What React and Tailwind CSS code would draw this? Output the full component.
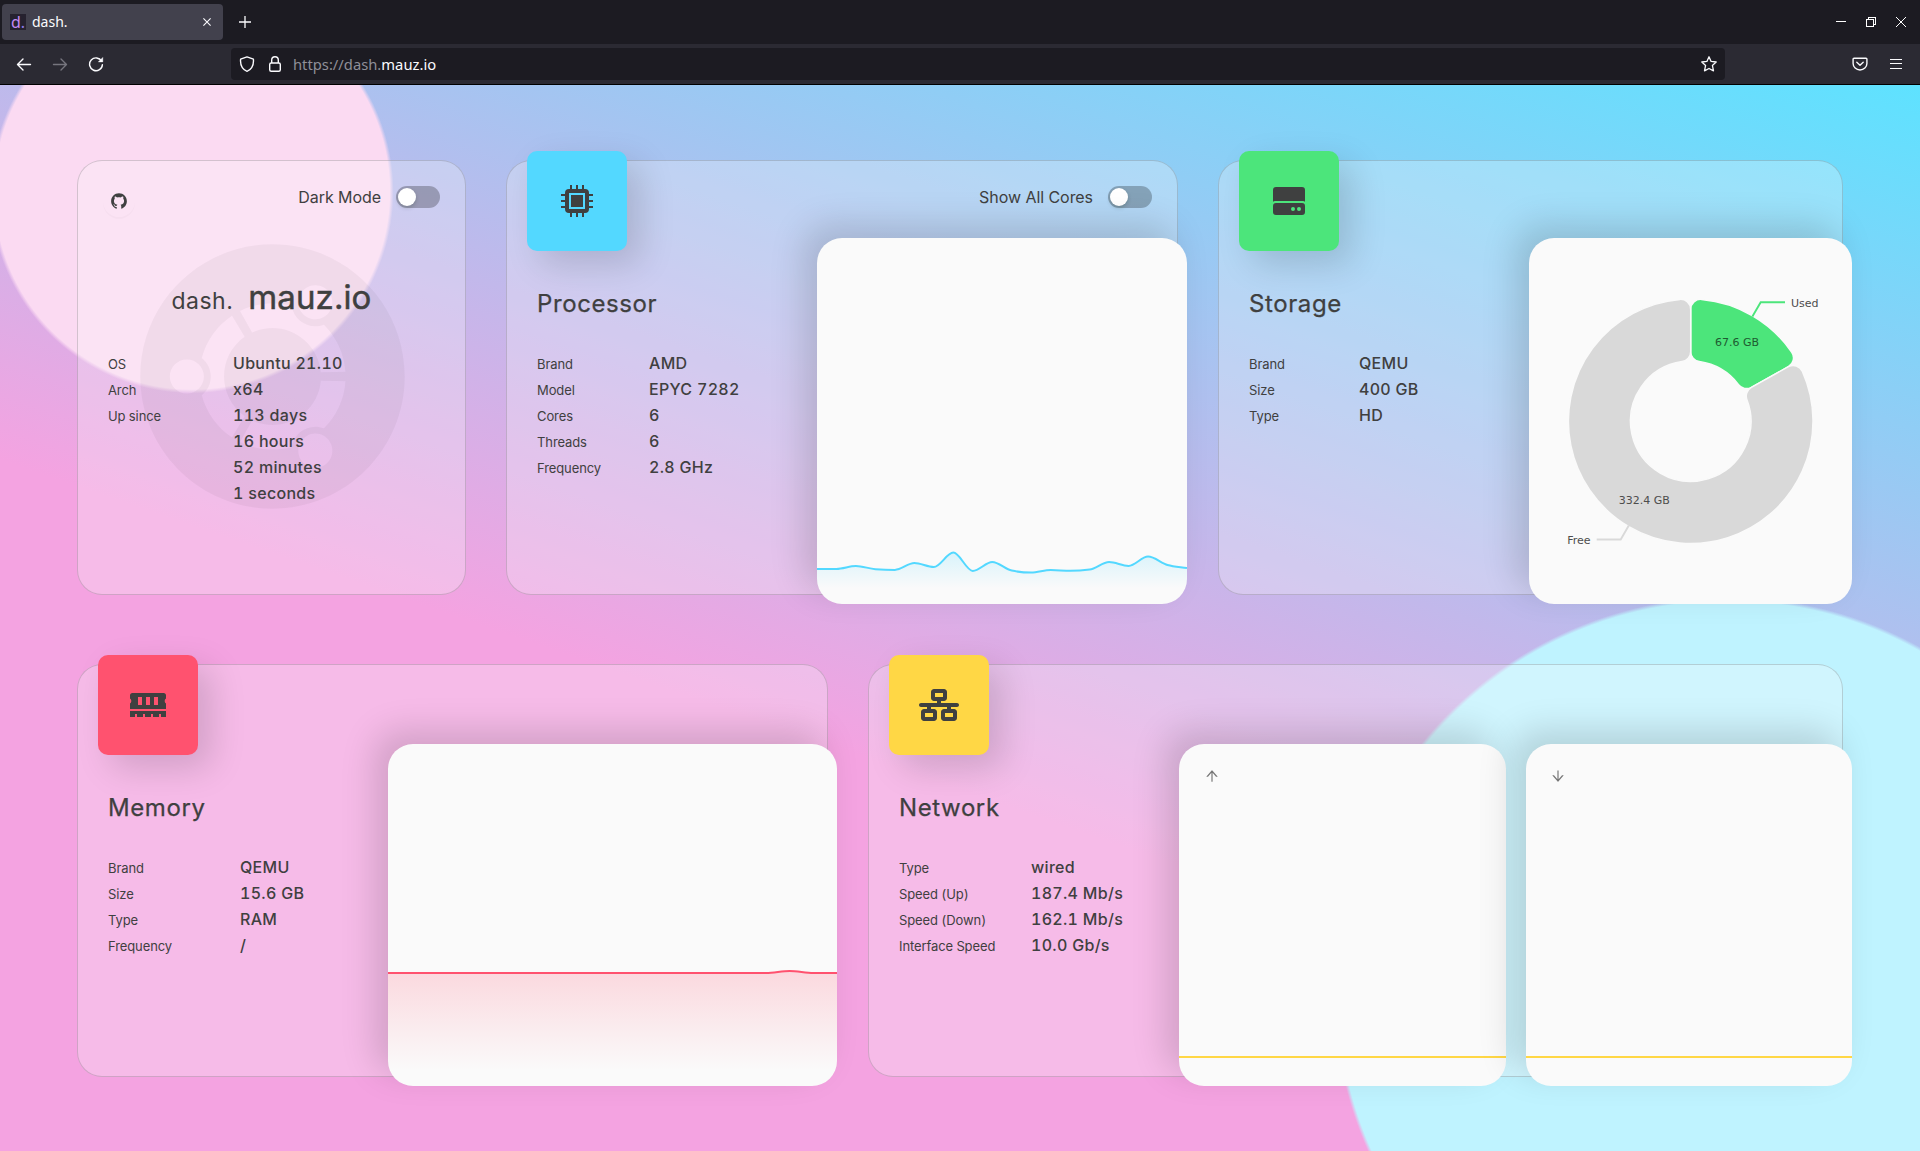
import { FaNetworkWired } from "react-icons/fa6";
import { FaUbuntu } from "react-icons/fa";
import { AiFillGithub, AiOutlineArrowUp, AiOutlineArrowDown } from "react-icons/ai";

/* ---------- browser chrome ---------- */

function Tab() {
  return (
    <div className="flex h-9 w-[221px] items-center rounded bg-[#42414d] pr-[11px] pl-2">
      <div className="flex h-4 w-4 items-center justify-center bg-[#26222f] font-['Noto_Sans'] text-[16px] leading-4 text-[#c58af5]">
        d<span className="text-[#8f7be8]">.</span>
      </div>
      <span className="ml-[6px] font-['Noto_Sans',sans-serif] text-[14px] leading-5 text-[#fbfbfe]">dash.</span>
      <svg className="ml-auto" width="10" height="10" viewBox="0 0 10 10" stroke="#fbfbfe" strokeWidth="1.1" fill="none">
        <path d="M1.4 1.4l7.2 7.2M8.6 1.4L1.4 8.6" />
      </svg>
    </div>
  );
}

function Browser() {
  return (
    <header className="font-['Noto_Sans',sans-serif]">
      <div className="flex h-11 items-center bg-[#1c1b22] pl-0.5">
        <Tab />
        <svg className="ml-4" width="12" height="12" viewBox="0 0 12 12" stroke="#fbfbfe" strokeWidth="1.3" fill="none">
          <path d="M6 0v12M0 6h12" />
        </svg>
        <div className="ml-auto flex items-center gap-5 pr-[14px]">
          <svg width="10" height="10" viewBox="0 0 10 10" stroke="#fff" fill="none">
            <path d="M0 4.5h10" />
          </svg>
          <svg width="10" height="10" viewBox="0 0 10 10" stroke="#fff" fill="none" shapeRendering="crispEdges">
            <path d="M.5 2.5h7v7h-7zM2.5 2.5v-2h7v7h-2" />
          </svg>
          <svg width="10" height="10" viewBox="0 0 10 10" stroke="#fff" fill="none">
            <path d="M0 0l10 10M10 0L0 10" />
          </svg>
        </div>
      </div>
      <div className="flex h-[41px] items-center border-b border-black bg-[#2b2a33] pl-4">
        <svg width="16" height="16" viewBox="0 0 16 16" stroke="#fbfbfe" strokeWidth="1.4" fill="none" strokeLinecap="round" strokeLinejoin="round">
          <path d="M14.5 8.5h-13M7 3L1.5 8.5 7 14" />
        </svg>
        <svg className="ml-5" width="16" height="16" viewBox="0 0 16 16" stroke="#76757e" strokeWidth="1.4" fill="none" strokeLinecap="round" strokeLinejoin="round">
          <path d="M1.5 8.5h13M9 3l5.5 5.5L9 14" />
        </svg>
        <svg className="ml-5" width="16" height="16" viewBox="0 0 16 16" fill="none">
          <path d="M13.6 5.2A6.4 6.4 0 1 0 14.4 8.6" stroke="#fbfbfe" strokeWidth="1.4" strokeLinecap="round" />
          <path d="M14.800 1.400v4.500h-4.500z" fill="#fbfbfe" stroke="#fbfbfe" strokeWidth=".4" />
        </svg>
        <div className="ml-[127px] flex h-8 w-[1494px] items-center rounded bg-[#1c1b22] pr-2 pl-2">
          <svg width="16" height="16" viewBox="0 0 16 16" stroke="#fbfbfe" strokeWidth="1.4" fill="none" strokeLinejoin="round">
            <path d="M8 .9L14.4 3.2c.3 3.300-.4 6.500-1.700 8.500C11.500 13.500 9.700 14.800 8 15.300 6.300 14.800 4.500 13.500 3.300 11.700 2 9.700 1.300 6.500 1.600 3.200z" />
          </svg>
          <svg className="ml-3" width="16" height="16" viewBox="0 0 16 16" stroke="#fbfbfe" strokeWidth="1.4" fill="none">
            <rect x="2.700" y="7" width="10.600" height="8.300" rx="1.500" />
            <path d="M4.700 7V4a3.300 3.300 0 0 1 6.600 0v3" />
          </svg>
          <div className="ml-[10px] text-[14.75px] leading-5 text-[#8f8f98]">
            https://dash.<span className="text-[#fbfbfe]">mauz.io</span>
          </div>
          <svg className="ml-auto" width="16" height="16" viewBox="0 0 16 16" stroke="#fbfbfe" strokeWidth="1.300" fill="none" strokeLinejoin="round">
            <path d="M8 .8l2.100 4.600 5.100.6-3.800 3.400 1.100 5.400L8 12.500l-4.500 2.300 1.100-5.400L.8 6l5.100-.6z" />
          </svg>
        </div>
        <svg className="ml-[127px]" width="16" height="16" viewBox="0 0 16 16" stroke="#fbfbfe" strokeWidth="1.400" fill="none" strokeLinecap="round" strokeLinejoin="round">
          <path d="M2 2.200h12a.9.9 0 0 1 .9.9V7.500a6.900 6.500 0 0 1-13.800 0V3.100A.9.9 0 0 1 2 2.200zM4.800 6.300L8 9.300l3.200-3" />
        </svg>
        <svg className="ml-[22px]" width="12" height="12" viewBox="0 0 12 12" stroke="#fbfbfe" fill="none" shapeRendering="crispEdges">
          <path d="M0 1.500h12M0 5.500h12M0 10.500h12" />
        </svg>
      </div>
    </header>
  );
}

/* ---------- icons ---------- */

const ChipIcon = () => (
  <svg width="32" height="32" viewBox="0 0 32 32" fill="#3f4040">
    <path d="M9 0h2v5H9zM15 0h2v5h-2zM21 0h2v5h-2zM9 27h2v5H9zM15 27h2v5h-2zM21 27h2v5h-2zM0 9h5v2H0zM0 15h5v2H0zM0 21h5v2H0zM27 9h5v2h-5zM27 15h5v2h-5zM27 21h5v2h-5z" />
    <path fillRule="evenodd" d="M8 4h16a4 4 0 0 1 4 4v16a4 4 0 0 1-4 4H8a4 4 0 0 1-4-4V8a4 4 0 0 1 4-4zM8 8v16h16V8z" />
    <path d="M10 10h12v12H10z" />
  </svg>
);

const DriveIcon = () => (
  <svg width="32" height="32" viewBox="0 0 32 32" fill="#3f4040">
    <path d="M3 2h26a3 3 0 0 1 3 3v11.700a4 4 0 0 0-2-.7H2a4 4 0 0 0-2 .7V5a3 3 0 0 1 3-3z" />
    <path fillRule="evenodd" d="M3 18h26a3 3 0 0 1 3 3v6a3 3 0 0 1-3 3H3a3 3 0 0 1-3-3v-6a3 3 0 0 1 3-3zM20 22a2 2 0 1 0 0 4 2 2 0 0 0 0-4zM26 22a2 2 0 1 0 0 4 2 2 0 0 0 0-4z" />
  </svg>
);

const MemoryIcon = () => (
  <svg width="36" height="24" viewBox="0 0 36 24" fill="#3f4040">
    <path
      fillRule="evenodd"
      d="M2.500 0h31A2.500 2.500 0 0 1 36 2.500v3a3 3 0 0 0 0 5V16H0v-5.500a3 3 0 0 0 0-5v-3A2.500 2.500 0 0 1 2.500 0zM8 4v8h4V4zM16 4v8h4V4zM24 4v8h4V4z"
    />
    <path d="M0 18h36v6h-5v-3h-2v3h-6v-3h-2v3h-6v-3h-2v3H7v-3H5v3H0z" />
  </svg>
);

/* ---------- charts ---------- */

// Monotone cubic interpolation through the given points.
function smooth(pts) {
  const n = pts.length;
  const s = pts.slice(1).map((p, i) => (p[1] - pts[i][1]) / (p[0] - pts[i][0]));
  const m = pts.map((_, i) => {
    if (i === 0) return s[0];
    if (i === n - 1) return s[n - 2];
    const a = s[i - 1];
    const b = s[i];
    if (a * b <= 0) return 0;
    return Math.sign(a) * Math.min(Math.abs(a), Math.abs(b), Math.abs(a + b) / 4) * 2;
  });
  let d = `M${pts[0][0]},${pts[0][1]}`;
  for (let i = 0; i < n - 1; i++) {
    const h = (pts[i + 1][0] - pts[i][0]) / 3;
    d += `C${pts[i][0] + h},${pts[i][1] + m[i] * h},${pts[i + 1][0] - h},${pts[i + 1][1] - m[i + 1] * h},${pts[i + 1][0]},${pts[i + 1][1]}`;
  }
  return d;
}

function AreaChart({ id, width, height, values, color, fadeTo, opacity }) {
  const step = width / (values.length - 1);
  const line = smooth(values.map((v, i) => [i * step, v]));
  return (
    <svg width={width} height={height} viewBox={`0 0 ${width} ${height}`} className="block">
      <defs>
        <linearGradient id={id} gradientUnits="userSpaceOnUse" x1="0" x2="0" y1={Math.min(...values)} y2={fadeTo}>
          <stop offset="0" stopColor={color} stopOpacity={opacity} />
          <stop offset="1" stopColor={color} stopOpacity="0" />
        </linearGradient>
      </defs>
      <path d={`${line}V${height}H0Z`} fill={`url(#${id})`} />
      <path d={line} fill="none" stroke={color} strokeWidth="2" />
    </svg>
  );
}

const CPU = [330.9, 330.9, 328, 331.2, 331.9, 325, 329, 314.6, 332.9, 324, 332.6, 334.6, 332, 332.8, 331.6, 324, 327.9, 318.6, 327, 330];
const RAM = [229, 229, 229, 229, 229, 229, 229, 229, 229, 229, 229, 229, 229, 229, 229, 229, 229, 227.1, 229, 229];

// Ring segment with rounded corners, angles clockwise from the top.
function ringSlice(cx, cy, R, r, a0, a1, rc) {
  const p = (rad, a) => `${cx + rad * Math.sin(a)},${cy - rad * Math.cos(a)}`;
  const ao = Math.asin(rc / (R - rc));
  const ai = Math.asin(rc / (r + rc));
  const lo = Math.sqrt((R - rc) ** 2 - rc ** 2);
  const li = Math.sqrt((r + rc) ** 2 - rc ** 2);
  const big = a1 - a0 > Math.PI ? 1 : 0;
  return `M${p(li, a0)}L${p(lo, a0)}A${rc},${rc} 0 0 1 ${p(R, a0 + ao)}A${R},${R} 0 ${big} 1 ${p(R, a1 - ao)}A${rc},${rc} 0 0 1 ${p(lo, a1)}L${p(li, a1)}A${rc},${rc} 0 0 1 ${p(r, a1 - ai)}A${r},${r} 0 ${big} 0 ${p(r, a0 + ai)}A${rc},${rc} 0 0 1 ${p(li, a0)}Z`;
}

function StorageChart() {
  const split = (67.6 / 400) * Math.PI * 2;
  return (
    <svg width="323" height="366" viewBox="0 0 323 366" className="block font-['DejaVu_Sans',sans-serif] text-[11px]">
      <g stroke="#fafafa" strokeWidth="1.5">
        <path d={ringSlice(161.7, 183.2, 122.3, 60.2, 0, split, 10)} fill="#4ce57b" />
        <path d={ringSlice(161.7, 183.2, 122.3, 60.2, split, Math.PI * 2, 10)} fill="#d9d9d9" />
      </g>
      <path d="M223.400 78.600L231.700 64.300H256" stroke="#4ce57b" strokeWidth="1.9" fill="none" />
      <path d="M99.800 287.600L91.700 301.500H67.700" stroke="#d9d9d9" strokeWidth="1.9" fill="none" />
      <g fill="#4d4d4d">
        <text x="262" y="69">Used</text>
        <text x="208" y="108" textAnchor="middle" fill="#1e5b31">67.6 GB</text>
        <text x="115.3" y="266" textAnchor="middle">332.4 GB</text>
        <text x="61.5" y="306" textAnchor="end">Free</text>
      </g>
    </svg>
  );
}

/* ---------- building blocks ---------- */

function Switch({ label }) {
  return (
    <label className="flex items-center gap-[15px] text-base leading-[22px] tracking-[-0.06px]">
      {label}
      <span className="flex h-[22px] w-11 items-center rounded-full bg-black/25 px-0.5">
        <span className="h-[18px] w-[18px] rounded-full bg-white shadow-[0_2px_4px_rgba(0,35,11,0.2)]" />
      </span>
    </label>
  );
}

function Specs({ rows, columns }) {
  return (
    <dl className={`grid ${columns} auto-rows-[26px] items-baseline leading-[26px] whitespace-nowrap tabular-nums`}>
      {rows.map(([k, v]) => (
        <div key={v + k} className="contents">
          <dt className="text-[13px] tracking-[-0.1px]">{k}</dt>
          <dd className="text-base font-medium tracking-[0.3px]">{v}</dd>
        </div>
      ))}
    </dl>
  );
}

function Card({ className, children }) {
  return (
    <section className={`flex shrink-0 rounded-[25px] border border-[#5a5a5a]/25 bg-[#fafafa]/28 ${className}`}>
      {children}
    </section>
  );
}

function Info({ title, icon, tile, rows, columns }) {
  return (
    <div className="-mt-[10px] min-w-0 flex-1">
      <div className={`ml-5 flex h-[100px] w-[100px] items-center justify-center rounded-[10px] shadow-[13px_13px_35px_0_rgba(0,0,0,0.15)] ${tile}`}>
        {icon}
      </div>
      <div className="pl-[30px]">
        <h2 className="mt-[37px] mb-[31px] text-2xl leading-8 font-normal tracking-[0.6px] [-webkit-text-stroke:0.25px_#3f4040]">{title}</h2>
        <Specs rows={rows} columns={columns} />
      </div>
    </div>
  );
}

function Panel({ className = "", children }) {
  return (
    <div className={`overflow-hidden rounded-[25px] bg-[#fafafa] shadow-[-13px_-13px_35px_0_rgba(0,0,0,0.15)] ${className}`}>
      {children}
    </div>
  );
}

function NetworkPanel({ icon }) {
  return (
    <Panel className="flex flex-1 flex-col">
      <div className="pt-[24px] pl-[24.5px] text-base text-[#777]">{icon}</div>
      <div className="mt-auto mb-7 h-0.5 bg-[#ffd745]" />
    </Panel>
  );
}

export default function App() {
  return (
    <div className="flex h-[1151px] w-[1920px] flex-col overflow-hidden">
      <Browser />
      <main className="flex flex-1 flex-col gap-[69px] bg-[radial-gradient(circle_at_10%_10%,#fbdaf2_10%,transparent_10.2%),radial-gradient(circle_at_90%_85%,#bff3ff_20%,transparent_20.2%),linear-gradient(19deg,#f4a3e1_40%,#5ee2ff_100%)] pt-[75px] pl-[77px] font-['Inter',sans-serif] text-[#3f4040]">
        <div className="flex h-[435px] gap-10">
          <Card className="relative w-[389px] flex-col">
            <div className="absolute inset-x-0 top-[79px] flex justify-center pl-px text-black/[0.04]">
              <FaUbuntu className="h-[273px] w-[273px]" />
            </div>
            <div className="relative flex h-[77px] items-start justify-between pt-[25px] pr-[25px] pl-[25px]">
              <span className="-mt-px flex h-8 w-8 items-center justify-center rounded-full shadow-[0_2px_0_rgba(0,0,0,0.02)]">
                <AiFillGithub className="h-[18px] w-[18px]" />
              </span>
              <Switch label="Dark Mode" />
            </div>
            <div className="relative mt-[35px] flex items-baseline justify-center gap-[15px] leading-[48px]">
              <span className="text-[23px] tracking-[0.5px]">dash.</span>
              <span className="text-[33px] font-normal tracking-[0.1px] [-webkit-text-stroke:0.5px_#3f4040]">mauz.io</span>
            </div>
            <div className="relative mt-[26px] pl-[30px]">
              <Specs
                columns="grid-cols-[125px_auto]"
                rows={[
                  ["OS", "Ubuntu 21.10"],
                  ["Arch", "x64"],
                  ["Up since", "113 days"],
                  ["", "16 hours"],
                  ["", "52 minutes"],
                  ["", "1 seconds"],
                ]}
              />
            </div>
          </Card>

          <Card className="w-[672px]">
            <Info
              title="Processor"
              icon={<ChipIcon />}
              tile="bg-[#53d8ff]"
              columns="grid-cols-[112px_auto]"
              rows={[
                ["Brand", "AMD"],
                ["Model", "EPYC 7282"],
                ["Cores", "6"],
                ["Threads", "6"],
                ["Frequency", "2.8 GHz"],
              ]}
            />
            <div className="-mr-[10px] -mb-[10px] flex w-[370px] flex-col">
              <div className="flex h-[77px] items-start justify-end pt-[25px] pr-[35px]">
                <Switch label="Show All Cores" />
              </div>
              <Panel className="flex-1">
                <AreaChart id="cpu" width={370} height={366} values={CPU} color="#53d8ff" fadeTo={350} opacity={0.2} />
              </Panel>
            </div>
          </Card>

          <Card className="w-[625px]">
            <Info
              title="Storage"
              icon={<DriveIcon />}
              tile="bg-[#4ce57b]"
              columns="grid-cols-[110px_auto]"
              rows={[
                ["Brand", "QEMU"],
                ["Size", "400 GB"],
                ["Type", "HD"],
              ]}
            />
            <Panel className="mt-[77px] -mr-[10px] -mb-[10px] w-[323px]">
              <StorageChart />
            </Panel>
          </Card>
        </div>

        <div className="flex h-[413px] gap-10">
          <Card className="w-[751px]">
            <Info
              title="Memory"
              icon={<MemoryIcon />}
              tile="bg-[#ff526f]"
              columns="grid-cols-[132px_auto]"
              rows={[
                ["Brand", "QEMU"],
                ["Size", "15.6 GB"],
                ["Type", "RAM"],
                ["Frequency", "/"],
              ]}
            />
            <Panel className="mt-[79px] -mr-[10px] -mb-[10px] w-[449px]">
              <AreaChart id="ram" width={449} height={342} values={RAM} color="#ff526f" fadeTo={326} opacity={0.2} />
            </Panel>
          </Card>

          <Card className="w-[975px]">
            <Info
              title="Network"
              icon={<FaNetworkWired className="h-8 w-10" />}
              tile="bg-[#ffd745]"
              columns="grid-cols-[132px_auto]"
              rows={[
                ["Type", "wired"],
                ["Speed (Up)", "187.4 Mb/s"],
                ["Speed (Down)", "162.1 Mb/s"],
                ["Interface Speed", "10.0 Gb/s"],
              ]}
            />
            <div className="mt-[79px] -mr-[10px] -mb-[10px] flex w-[673px] gap-5">
              <NetworkPanel icon={<AiOutlineArrowUp />} />
              <NetworkPanel icon={<AiOutlineArrowDown />} />
            </div>
          </Card>
        </div>
      </main>
    </div>
  );
}
